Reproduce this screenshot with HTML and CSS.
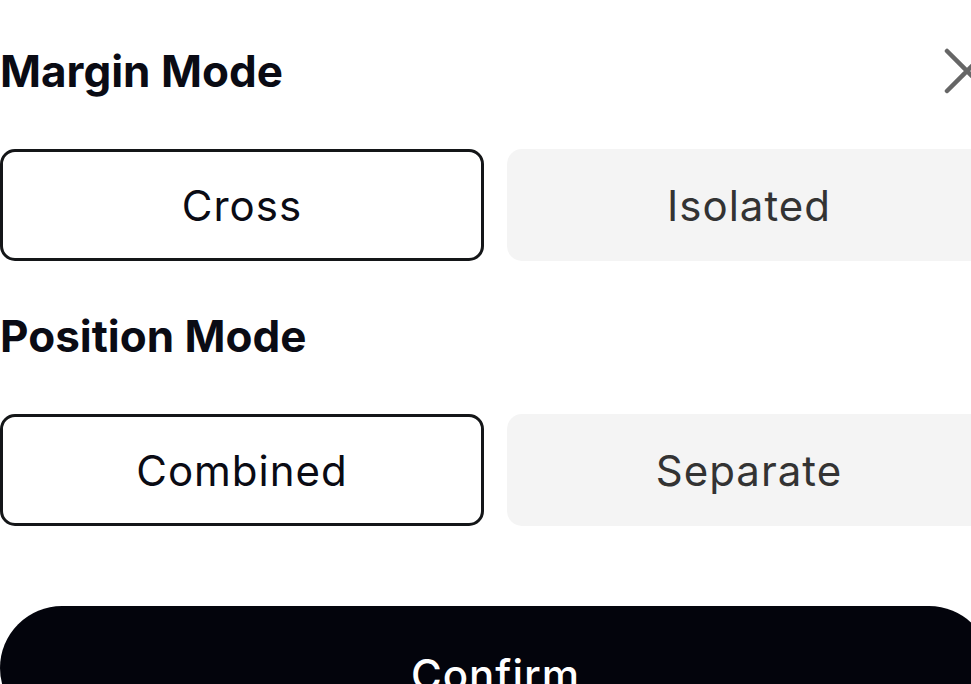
FILE: index.html
```html
<!DOCTYPE html>
<html lang="en">
<head>
<meta charset="utf-8">
<title>Margin Mode</title>
<link rel="stylesheet" href="styles.css">
</head>
<body>
<div class="sheet">
  <div class="header">
    <h2 class="title">Margin Mode</h2>
    <button class="close" aria-label="Close">
      <svg width="48" height="48" viewBox="0 0 48 48"><path d="M4 4 L44 44 M44 4 L4 44" stroke="#666" stroke-width="4.5" stroke-linecap="round" fill="none"/></svg>
    </button>
  </div>
  <div class="options">
    <button class="option active">Cross</button>
    <button class="option">Isolated</button>
  </div>
  <div class="header second">
    <h2 class="title">Position Mode</h2>
  </div>
  <div class="options">
    <button class="option active">Combined</button>
    <button class="option">Separate</button>
  </div>
  <button class="confirm">Confirm</button>
</div>
</body>
</html>
```

FILE: styles.css
```css
html, body {
  margin: 0;
  padding: 0;
  background: #ffffff;
  overflow: hidden;
}
body {
  width: 971px;
  height: 684px;
  font-family: Inter, "Noto Sans", sans-serif;
}
.sheet {
  width: 991px;
  padding-top: 41px;
}
.header {
  display: flex;
  justify-content: space-between;
  align-items: center;
  height: 60px;
}
.header.second {
  margin-top: 45px;
}
.title {
  margin: 0;
  font-size: 44px;
  line-height: 60px;
  font-weight: 700;
  color: #0a0b14;
}
.close {
  width: 48px;
  height: 48px;
  padding: 0;
  border: none;
  background: none;
  display: flex;
}
.options {
  display: grid;
  grid-template-columns: 1fr 1fr;
  gap: 23px;
  margin-top: 48px;
}
.option {
  height: 112px;
  border-radius: 15px;
  border: 3px solid transparent;
  background: #f4f4f4;
  color: #333333;
  font-family: inherit;
  font-size: 42px;
  letter-spacing: 1px;
  font-weight: 400;
  padding: 0;
}
.option.active {
  background: #ffffff;
  border-color: #141618;
  color: #0a0b14;
}
.confirm {
  display: block;
  width: 100%;
  height: 124px;
  margin-top: 80px;
  border: none;
  border-radius: 62px;
  background: #03040c;
  color: #ffffff;
  font-family: inherit;
  font-size: 42px;
  letter-spacing: 1px;
  font-weight: 500;
  padding: 12px 0 0;
}
```
